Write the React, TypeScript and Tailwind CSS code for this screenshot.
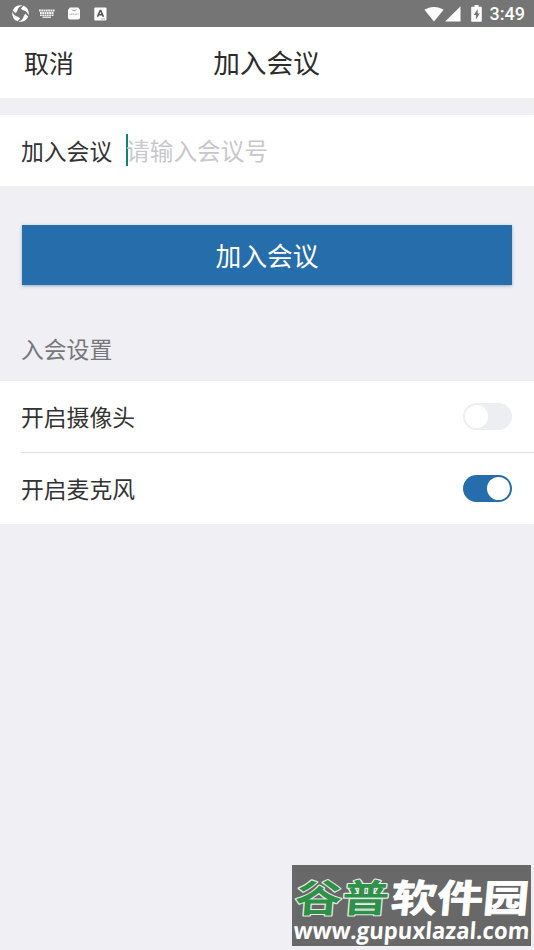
import React from 'react';
import clsx from 'clsx';

interface SwitchProps {
  checked: boolean;
}

const Switch: React.FC<SwitchProps> = ({ checked }) => (
  <div
    role="switch"
    aria-checked={checked}
    className={clsx(
      'flex h-[27px] w-[49px] items-center rounded-full px-[2px]',
      checked ? 'justify-end bg-[#266dab]' : 'justify-start bg-[#edeef2]',
    )}
  >
    <div className="size-[23px] rounded-full bg-white" />
  </div>
);

const StatusBar: React.FC = () => (
  <div className="flex h-[27px] shrink-0 items-center justify-between bg-[#757575] pr-[9px] pl-[11.5px]">
    <div className="flex items-center text-white">
      <svg width="17" height="17" viewBox="0 0 17 17" fill="#fff">
        <path d="M1.800 3.500C4 .5 7.500-.2 10.500.5 7.600 1.300 6 2.800 5.300 5.800L3.800 8.200.8 5.600Z" />
        <path d="M13.500 1.800c3 2.200 3.700 5.700 3 8.700C15.700 7.600 14.200 6 11.200 5.300L8.800 3.800 11.400.8Z" />
        <path d="M15.200 13.500c-2.200 3-5.700 3.700-8.700 3 2.900-.8 4.500-2.300 5.200-5.300l1.500-2.400 3 2.600Z" />
        <path d="M3.500 15.200C.5 13-.2 9.500.5 6.500 1.300 9.400 2.800 11 5.800 11.700l2.400 1.500-2.600 3Z" />
      </svg>
      <svg className="ml-[10px]" width="16" height="9" viewBox="0 0 16 9" stroke="#f2f2f2">
        <path d="M0 1.500h16M1 4h14" strokeWidth="1.900" strokeDasharray="1.800 .5" />
        <path d="M1 6.200h14" strokeWidth="1.500" strokeDasharray="1.800 .5" />
        <path d="M3.500 8.200h8.500" strokeWidth="1.300" />
      </svg>
      <svg className="ml-[13px]" width="12" height="13" viewBox="0 0 12 13">
        <path d="M1.800.5h8.400L12 3v7.500a2 2 0 0 1-2 2H2a2 2 0 0 1-2-2V3Z" fill="#fff" />
        <path d="M3.800 2.500c.8 1.800 3.600 1.800 4.400 0" fill="none" stroke="#888" strokeWidth=".9" />
        <path d="M1.500 7.200h9" stroke="#bbb" strokeWidth="1.500" strokeDasharray="1.200 .5" />
      </svg>
      <svg className="ml-[14px]" width="13" height="14" viewBox="0 0 13 14">
        <rect x=".3" y=".5" width="12.200" height="13" rx="1" fill="#fff" />
        <path d="M3.500 9.800 6.200 3.500h.5l2.700 6.300M4.600 7.800h3.700" fill="none" stroke="#555" strokeWidth="1.600" />
        <path d="M6.500 12h4.500" stroke="#aaa" strokeWidth=".8" />
      </svg>
    </div>
    <div className="flex items-center">
      <svg width="20" height="16" viewBox="0 0 20 16" fill="#fff">
        <path d="M10 15.500.4 3.800C5.500-.1 14.500-.1 19.600 3.800Z" />
      </svg>
      <svg className="ml-[1px]" width="16" height="16" viewBox="0 0 16 16" fill="#fff">
        <path d="M15.500.2v15.300H.2Z" />
      </svg>
      <svg className="ml-[10px]" width="11" height="17" viewBox="0 0 11 17">
        <path
          d="M3.500 0h4v1.800H10a.8.8 0 0 1 .8.8v13.300a.8.8 0 0 1-.8.8H1a.8.8 0 0 1-.8-.8V2.600a.8.8 0 0 1 .8-.8h2.500Z"
          fill="#fff"
        />
        <path d="M6.700 4 2.700 10h2.200v4.500l3.900-6H6.700Z" fill="#757575" />
      </svg>
      <span className="ml-[8px] font-[Roboto] text-[18px] leading-[27px] font-medium text-white">3:49</span>
    </div>
  </div>
);

interface SettingRowProps {
  label: string;
  checked: boolean;
}

const SettingRow: React.FC<SettingRowProps> = ({ label, checked }) => (
  <div className="flex h-[71px] items-center justify-between pr-[22px]">
    <span className="pt-[2px] text-[22.8px] text-[#333]">{label}</span>
    <Switch checked={checked} />
  </div>
);

const Watermark: React.FC = () => (
  <svg className="absolute top-[865px] left-[292px] overflow-visible" width="239" height="81" viewBox="0 0 239 81">
    <rect width="239" height="81" fill="#686868" />
    <g
      transform="translate(2 47) skewX(-5)"
      fontFamily="'Noto Sans CJK SC', sans-serif"
      fontWeight="700"
      fontSize="38"
      strokeLinejoin="round"
      paintOrder="stroke"
    >
      <text textLength="94" lengthAdjust="spacingAndGlyphs" fill="#2f9148" stroke="#e4eee6" strokeWidth="2.2">
        谷普
      </text>
      <text x="96" textLength="138" lengthAdjust="spacingAndGlyphs" fill="#fff" stroke="#fff" strokeWidth=".8">
        软件园
      </text>
    </g>
    <text
      transform="translate(1 73.500) skewX(-4)"
      textLength="236"
      lengthAdjust="spacingAndGlyphs"
      fontFamily="'Open Sans', sans-serif"
      fontWeight="700"
      fontSize="23.5"
      fill="#fff"
    >
      www.gupuxlazal.com
    </text>
  </svg>
);

export default function App() {
  return (
    <div className="relative flex h-[950px] w-[534px] flex-col overflow-hidden bg-[#efeff4] font-['Noto_Sans_CJK_SC',sans-serif]">
      <StatusBar />

      <header className="grid h-[71px] shrink-0 grid-cols-[1fr_auto_1fr] items-center bg-white px-[24px] text-[#2c2c2c]">
        <span className="text-[25px]">取消</span>
        <h1 className="-ml-px text-[26.7px]">加入会议</h1>
      </header>

      <div className="mt-[17px] flex h-[71px] shrink-0 items-center bg-white pl-[21px]">
        <label className="w-[105px] pt-[2px] text-[22.8px] text-[#333]">加入会议</label>
        <div className="mb-[2px] h-[32px] w-[2px] bg-[#0c8577]" />
        <span className="-ml-[2px] text-[23.7px] text-[#c8c8cc]">请输入会议号</span>
      </div>

      <button className="mx-[22px] mt-[39px] h-[60px] shrink-0 bg-[#266dab] text-[25.8px] text-white shadow-[0_1px_3px_rgba(70,110,160,0.5)]">
        加入会议
      </button>

      <h2 className="mt-[32px] flex h-[64px] shrink-0 items-center pl-[21px] text-[22.8px] text-[#77777b]">
        入会设置
      </h2>

      <div className="shrink-0 bg-white pl-[21px]">
        <SettingRow label="开启摄像头" checked={false} />
        <div className="h-px bg-[#dddddf]" />
        <SettingRow label="开启麦克风" checked />
      </div>

      <Watermark />
    </div>
  );
}
